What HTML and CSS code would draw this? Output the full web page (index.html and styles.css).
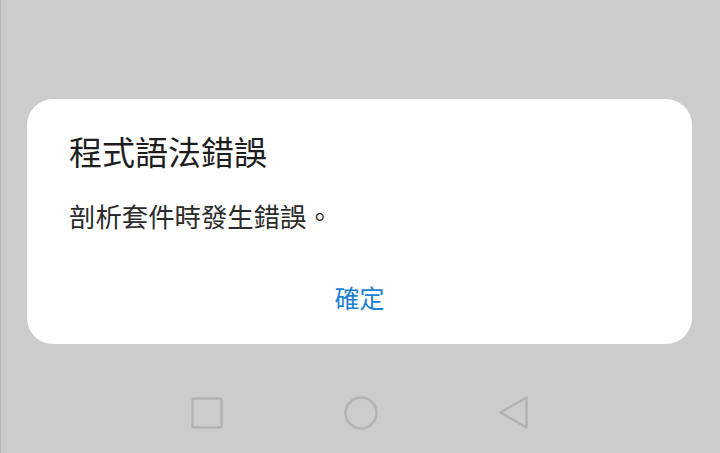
FILE: index.html
```html
<!DOCTYPE html>
<html lang="zh-Hant">
<head>
<meta charset="utf-8">
<title>程式語法錯誤</title>
<link rel="stylesheet" href="styles.css">
</head>
<body>
<div class="screen">
  <div class="dialog">
    <h1 class="title">程式語法錯誤</h1>
    <p class="message">剖析套件時發生錯誤。</p>
    <div class="actions"><button class="btn">確定</button></div>
  </div>
  <nav class="navbar">
    <svg class="nav-icon" width="34" height="34" viewBox="0 0 34 34"><rect x="2.5" y="2.5" width="29" height="29" rx="2" fill="none" stroke="#b3b3b3" stroke-width="2.5"/></svg>
    <svg class="nav-icon" width="36" height="36" viewBox="0 0 36 36"><circle cx="18" cy="18" r="15.5" fill="none" stroke="#b3b3b3" stroke-width="2.5"/></svg>
    <svg class="nav-icon" width="34" height="36" viewBox="0 0 34 36"><path d="M28.5 2.5 L2.5 17.5 L28.5 32.5 Z" fill="none" stroke="#b3b3b3" stroke-width="2.5" stroke-linejoin="round"/></svg>
  </nav>
</div>
</body>
</html>
```
FILE: styles.css
```css
html, body {
  margin: 0;
  padding: 0;
  background: #cccccc;
}
.screen {
  width: 720px;
  height: 453px;
  box-sizing: border-box;
  border-left: 1px solid #b8b8b8;
  display: flex;
  flex-direction: column;
  font-family: "Noto Sans CJK TC", "Noto Sans", sans-serif;
}
.dialog {
  margin: 99px 0 0 26px;
  width: 665px;
  height: 245px;
  box-sizing: border-box;
  background: #ffffff;
  border-radius: 26px;
  padding: 32px 0 0 42px;
  display: flex;
  flex-direction: column;
}
.title {
  margin: 0;
  font-size: 33px;
  line-height: 40px;
  font-weight: 400;
  color: #1e1e1e;
}
.message {
  margin: 28px 0 0;
  font-size: 26.4px;
  line-height: 34px;
  font-weight: 400;
  color: #2b2b2b;
}
.actions {
  margin: 47px 0 0 -42px;
  display: flex;
  justify-content: center;
}
.btn {
  border: 0;
  background: none;
  padding: 0;
  font-family: inherit;
  font-size: 25px;
  line-height: 34px;
  color: #1b7fd3;
}
.navbar {
  margin-top: 50px;
  height: 38px;
  display: flex;
  align-items: center;
  gap: 119px;
  padding-left: 188.5px;
}
.nav-icon {
  display: block;
}
```
